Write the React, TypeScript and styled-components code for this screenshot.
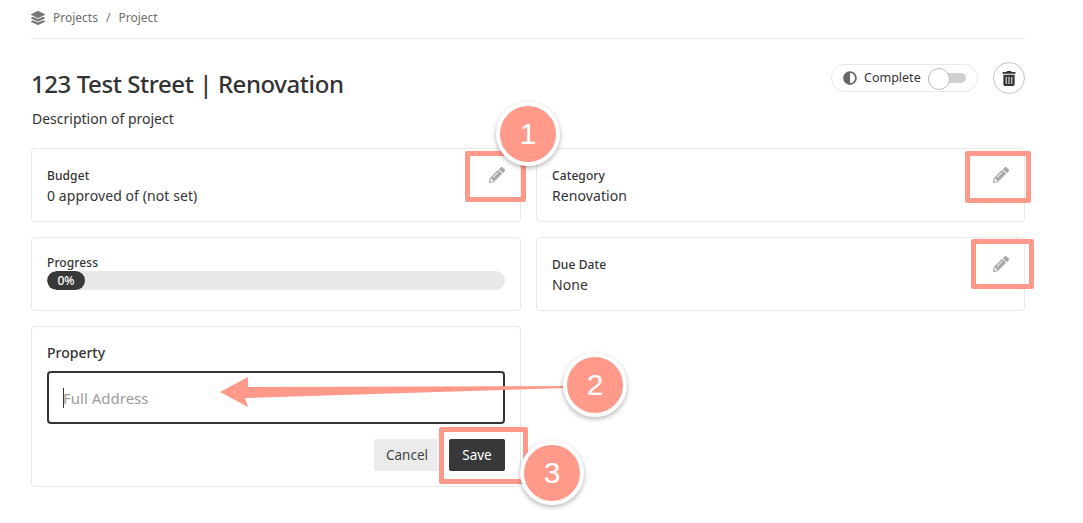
import React from "react";
import styled, { createGlobalStyle } from "styled-components";
import { FaLayerGroup, FaPencilAlt, FaTrashAlt, FaAdjust } from "react-icons/fa";

const Global = createGlobalStyle`
  html, body { margin: 0; padding: 0; background: #fff; }
  body { font-family: "Noto Sans", "Open Sans", sans-serif; color: #333; }
  * { box-sizing: border-box; }
`;

const Page = styled.div`
  position: relative;
  width: 1083px;
  height: 523px;
  overflow: hidden;
  padding: 0 58px 0 31px;
`;

const Breadcrumb = styled.nav`
  height: 39px;
  display: flex;
  align-items: center;
  gap: 8px;
  padding-bottom: 3px;
  border-bottom: 1px solid #e8e8e8;
  font-size: 12px;
  color: #6d6d6d;
  svg { color: #777; width: 14px; height: 14px; }
`;

const Header = styled.header`
  display: flex;
  justify-content: space-between;
  align-items: flex-start;
  margin-top: 23px;
`;

const Title = styled.h1`
  margin: 0;
  font-size: 24px;
  line-height: 44px;
  font-weight: 500;
  letter-spacing: -0.43px;
  color: #333;
`;

const Description = styled.p`
  margin: 3px 0 0 1px;
  font-size: 14px;
  line-height: 20px;
  color: #333;
`;

const HeaderActions = styled.div`
  display: flex;
  align-items: center;
  gap: 15px;
`;

const CompletePill = styled.div`
  width: 147px;
  height: 28px;
  border: 1px solid #e8e8e8;
  border-radius: 14px;
  display: flex;
  align-items: center;
  padding-left: 11px;
  padding-bottom: 1px;
  font-size: 12.5px;
  color: #333;
  svg { width: 14px; height: 14px; color: #666; margin-right: 7px; }
`;

const Toggle = styled.span`
  position: relative;
  display: block;
  width: 38px;
  height: 10px;
  margin-left: 7px;
  border-radius: 5px;
  background: #d0d0d0;
  &::before {
    content: "";
    position: absolute;
    left: 0;
    top: -5px;
    width: 20px;
    height: 20px;
    border-radius: 50%;
    background: #fff;
    border: 1px solid #bbb;
  }
`;

const RoundButton = styled.button`
  width: 32px;
  height: 32px;
  border-radius: 50%;
  border: 1px solid #c4c4c4;
  background: #fff;
  padding: 0;
  display: flex;
  align-items: center;
  justify-content: center;
  color: #333;
  svg { width: 14px; height: 15px; }
`;

const Grid = styled.div`
  display: grid;
  grid-template-columns: 490px 489px;
  grid-auto-rows: 74px;
  gap: 15px;
  margin-top: 19px;
`;

const Card = styled.section`
  position: relative;
  border: 1px solid #e8e8e8;
  border-radius: 4px;
  background: #fff;
  padding: 18px 15px 0;
`;

const Label = styled.div`
  font-size: 12px;
  line-height: 17px;
  font-weight: 500;
  letter-spacing: 0.1px;
  color: #333;
`;

const Value = styled.div`
  font-size: 14px;
  line-height: 20px;
  margin-top: 2px;
  letter-spacing: 0.08px;
  color: #333;
`;

const EditButton = styled.span`
  position: absolute;
  right: 15px;
  top: 18px;
  color: #a9a9a9;
  display: flex;
  svg { width: 16px; height: 16px; }
`;

const ProgressCard = styled(Card)`
  padding-top: 16px;
`;

const Track = styled.div`
  height: 19px;
  width: 458px;
  border-radius: 10px;
  background: #e8e8e8;
  overflow: hidden;
`;

const Fill = styled.div`
  height: 100%;
  width: 38px;
  border-radius: 10px;
  background: #383838;
  color: #fff;
  font-size: 12px;
  font-weight: 500;
  line-height: 19px;
  text-align: center;
`;

const PropertyCard = styled(Card)`
  grid-row: span 2;
  height: 161px;
  padding-top: 16px;
`;

const PropertyLabel = styled.label`
  display: block;
  font-size: 14px;
  line-height: 20px;
  font-weight: 500;
  color: #333;
`;

const AddressInput = styled.div`
  height: 53px;
  width: 458px;
  margin-top: 8px;
  border: 2px solid #333;
  border-radius: 4px;
  padding-left: 14px;
  display: flex;
  align-items: center;
  font-size: 15px;
  color: #9b9b9b;
`;

const Caret = styled.span`
  width: 1px;
  height: 20px;
  background: #333;
  margin-right: -1px;
`;

const Actions = styled.div`
  display: flex;
  justify-content: flex-end;
  gap: 11px;
  width: 458px;
  margin-top: 15px;
`;

const ActionButton = styled.button<{ $primary?: boolean }>`
  height: 32px;
  width: ${(p) => (p.$primary ? 56 : 64)}px;
  border: none;
  border-radius: 2px;
  background: ${(p) => (p.$primary ? "#383838" : "#ebebeb")};
  color: ${(p) => (p.$primary ? "#fff" : "#444")};
  font: 400 13.5px "Noto Sans", sans-serif;
  padding: 0 0 0 ${(p) => (p.$primary ? 0 : 2)}px;
`;

const Highlight = styled.div<{ $x: number; $y: number; $w: number; $h: number }>`
  position: absolute;
  left: ${(p) => p.$x}px;
  top: ${(p) => p.$y}px;
  width: ${(p) => p.$w}px;
  height: ${(p) => p.$h}px;
  border: 5px solid #ff9a8b;
  border-radius: 2px;
`;

const Badge = styled.div<{ $x: number; $y: number }>`
  position: absolute;
  left: ${(p) => p.$x}px;
  top: ${(p) => p.$y}px;
  width: 64px;
  height: 64px;
  border-radius: 50%;
  background: #ff9a8b;
  border: 4px solid #fff;
  box-shadow: 0 2px 5px rgba(0, 0, 0, 0.3);
  color: #fff;
  font: 400 30px/56px "Liberation Sans", Arial, sans-serif;
  text-align: center;
`;

const ArrowLayer = styled.svg`
  position: absolute;
  left: 0;
  top: 0;
  pointer-events: none;
`;

export default function App() {
  return (
    <Page>
      <Global />
      <Breadcrumb>
        <FaLayerGroup />
        <span>Projects</span>
        <span>/</span>
        <span>Project</span>
      </Breadcrumb>
      <Header>
        <div>
          <Title>123 Test Street | Renovation</Title>
          <Description>Description of project</Description>
        </div>
        <HeaderActions>
          <CompletePill>
            <FaAdjust />
            Complete
            <Toggle />
          </CompletePill>
          <RoundButton aria-label="Delete">
            <FaTrashAlt />
          </RoundButton>
        </HeaderActions>
      </Header>
      <Grid>
        <Card>
          <Label>Budget</Label>
          <Value>0 approved of (not set)</Value>
          <EditButton>
            <FaPencilAlt />
          </EditButton>
        </Card>
        <Card>
          <Label>Category</Label>
          <Value>Renovation</Value>
          <EditButton>
            <FaPencilAlt />
          </EditButton>
        </Card>
        <ProgressCard>
          <Label>Progress</Label>
          <Track>
            <Fill>0%</Fill>
          </Track>
        </ProgressCard>
        <Card>
          <Label>Due Date</Label>
          <Value>None</Value>
          <EditButton>
            <FaPencilAlt />
          </EditButton>
        </Card>
        <PropertyCard>
          <PropertyLabel>Property</PropertyLabel>
          <AddressInput>
            <Caret />
            Full Address
          </AddressInput>
          <Actions>
            <ActionButton>Cancel</ActionButton>
            <ActionButton $primary>Save</ActionButton>
          </Actions>
        </PropertyCard>
      </Grid>

      <Highlight $x={465} $y={151} $w={61} $h={51} />
      <Highlight $x={965} $y={151} $w={66} $h={52} />
      <Highlight $x={971} $y={239} $w={63} $h={50} />
      <Highlight $x={439} $y={427} $w={89} $h={57} />
      <ArrowLayer width="1083" height="523" viewBox="0 0 1083 523">
        <polygon points="566,386 248,387 248,377 220,392 248,407 245,398 566,388" fill="#ff9a8b" />
      </ArrowLayer>
      <Badge $x={496} $y={102}>1</Badge>
      <Badge $x={563} $y={353}>2</Badge>
      <Badge $x={520} $y={441}>3</Badge>
    </Page>
  );
}
